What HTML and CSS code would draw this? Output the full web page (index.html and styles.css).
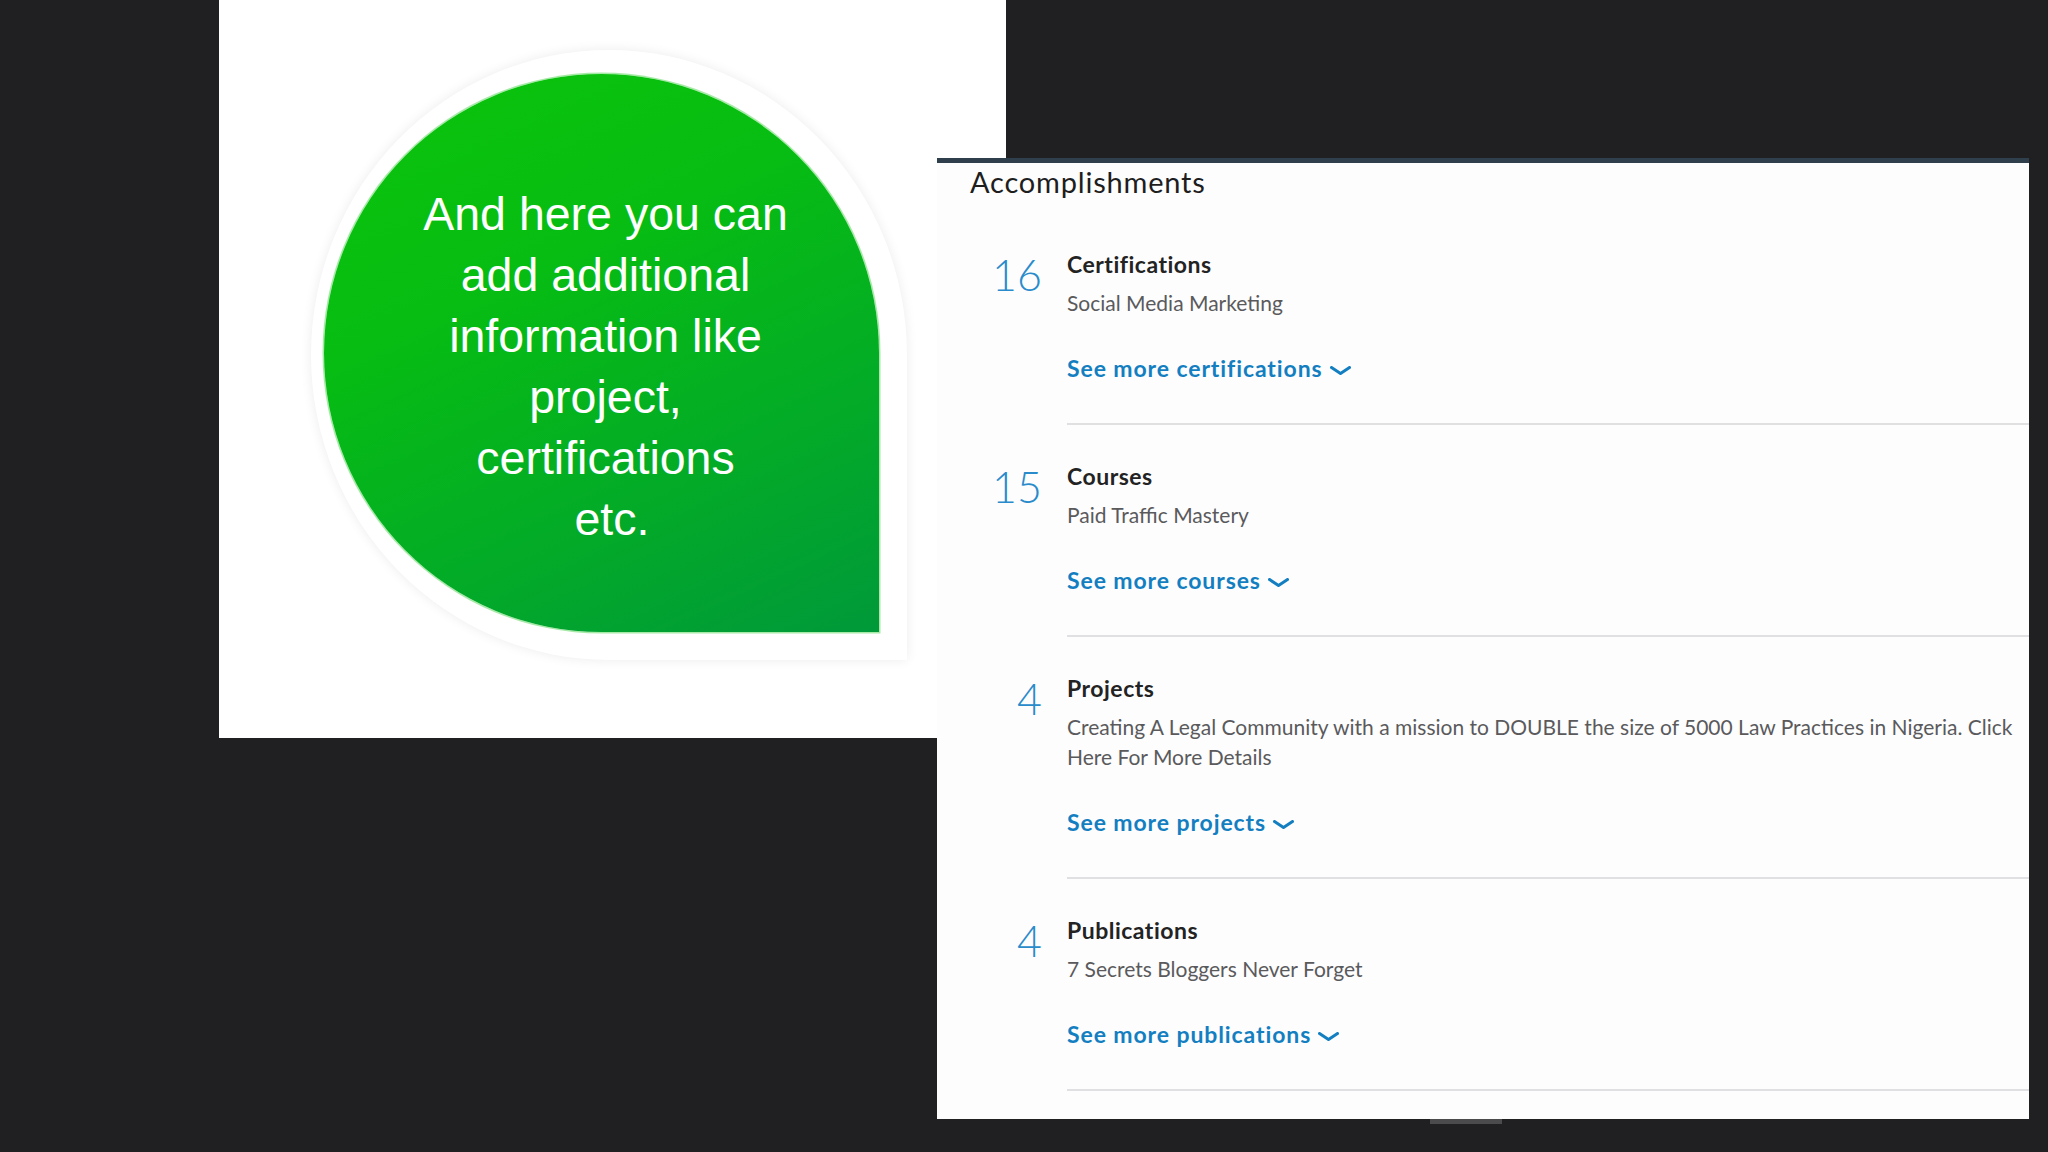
FILE: index.html
```html
<!DOCTYPE html>
<html lang="en">
<head>
<meta charset="utf-8">
<title>Accomplishments</title>
<link rel="stylesheet" href="styles.css">
</head>
<body>
<div class="stage">
  <section class="panel">
    <div class="bubble">
      <p class="bubble-text">And here you can<br>add additional<br>information like<br>project,<br>certifications<br>&nbsp;etc.</p>
    </div>
  </section>

  <section class="card">
    <h2 class="card-title">Accomplishments</h2>

    <div class="item">
      <div class="num">16</div>
      <div class="item-body">
        <h3 class="item-title">Certifications</h3>
        <p class="item-sub">Social Media Marketing</p>
        <a class="more">See more certifications<svg class="chev" viewBox="0 0 21 9" width="21" height="9"><polyline points="1.5,1.5 10.5,7.5 19.5,1.5"/></svg></a>
      </div>
    </div>

    <div class="item">
      <div class="num">15</div>
      <div class="item-body">
        <h3 class="item-title">Courses</h3>
        <p class="item-sub">Paid Traffic Mastery</p>
        <a class="more">See more courses<svg class="chev" viewBox="0 0 21 9" width="21" height="9"><polyline points="1.5,1.5 10.5,7.5 19.5,1.5"/></svg></a>
      </div>
    </div>

    <div class="item">
      <div class="num">4</div>
      <div class="item-body">
        <h3 class="item-title">Projects</h3>
        <p class="item-sub">Creating A Legal Community with a mission to DOUBLE the size of 5000 Law Practices in Nigeria. Click<br>Here For More Details</p>
        <a class="more">See more projects<svg class="chev" viewBox="0 0 21 9" width="21" height="9"><polyline points="1.5,1.5 10.5,7.5 19.5,1.5"/></svg></a>
      </div>
    </div>

    <div class="item">
      <div class="num">4</div>
      <div class="item-body">
        <h3 class="item-title">Publications</h3>
        <p class="item-sub">7 Secrets Bloggers Never Forget</p>
        <a class="more">See more publications<svg class="chev" viewBox="0 0 21 9" width="21" height="9"><polyline points="1.5,1.5 10.5,7.5 19.5,1.5"/></svg></a>
      </div>
    </div>
  </section>

  <div class="tab"></div>
</div>
</body>
</html>
```

FILE: styles.css
```css
html, body {
  margin: 0;
  padding: 0;
  background: #202023;
}

.stage {
  display: grid;
  width: 2048px;
  height: 1152px;
  overflow: hidden;
  grid-template-columns: 219px 718px 69px 1023px 19px;
  grid-template-rows: 158px 580px 381px 33px;
  background: #202023;
}

/* left white slide panel */
.panel {
  grid-column: 2 / 4;
  grid-row: 1 / 3;
  background: #ffffff;
  padding: 74px 0 0 105px;
  isolation: isolate;
}

.bubble {
  position: relative;
  box-sizing: border-box;
  width: 555px;
  height: 558px;
  border-radius: 50% 50% 0 50%;
  background: linear-gradient(155deg, #0bc40b 0%, #07bd12 35%, #03ab27 70%, #00993a 100%);
  box-shadow: 0 0 0 1.5px rgba(130, 225, 130, 0.7);
  padding: 110px 0 0 8px;
}

.bubble::before {
  content: "";
  position: absolute;
  top: -24px;
  left: -13px;
  right: -28px;
  bottom: -28px;
  border-radius: 50% 50% 0 50%;
  background: #ffffff;
  box-shadow: 0 0 12px rgba(0, 0, 0, 0.08);
  z-index: -1;
}

.bubble-text {
  margin: 0;
  font-family: "Liberation Sans", Arial, sans-serif;
  font-size: 46.5px;
  line-height: 61px;
  color: #ffffff;
  text-align: center;
}

/* accomplishments card */
.card {
  grid-column: 3 / 5;
  grid-row: 2 / 4;
  z-index: 1;
  box-sizing: border-box;
  background: #fdfdfe;
  border-top: 5px solid #2f404c;
  padding: 1px 0 0 33px;
  font-family: "Lato", "Source Sans Pro", sans-serif;
}

.card-title {
  margin: 0 0 13px;
  font-size: 29px;
  line-height: 36px;
  font-weight: 400;
  letter-spacing: 0.8px;
  color: #1e1e1e;
}

.item {
  display: grid;
  grid-template-columns: 72px 1fr;
  column-gap: 25px;
}

.num {
  padding-top: 39px;
  font-size: 43px;
  line-height: 45px;
  font-weight: 300;
  color: #2a8bcb;
  text-align: right;
}

.item-body {
  padding: 36px 0 40px;
  border-bottom: 2px solid #e0e0e2;
}

.item-title {
  margin: 0;
  font-size: 23px;
  line-height: 30px;
  font-weight: 700;
  letter-spacing: 0.5px;
  color: #232323;
}

.item-sub {
  margin: 9px 0 0;
  font-size: 21px;
  line-height: 30px;
  font-weight: 400;
  color: #5a5a5c;
}

.more {
  display: block;
  margin-top: 35px;
  font-size: 23px;
  line-height: 30px;
  font-weight: 700;
  letter-spacing: 0.9px;
  color: #137fc1;
}

.chev {
  margin-left: 7px;
  vertical-align: 2px;
  fill: none;
  stroke: #137fc1;
  stroke-width: 3;
  stroke-linecap: round;
  stroke-linejoin: round;
}

.tab {
  grid-column: 4;
  grid-row: 4;
  width: 72px;
  height: 5px;
  margin-left: 424px;
  background: #4b4b4e;
}
```
